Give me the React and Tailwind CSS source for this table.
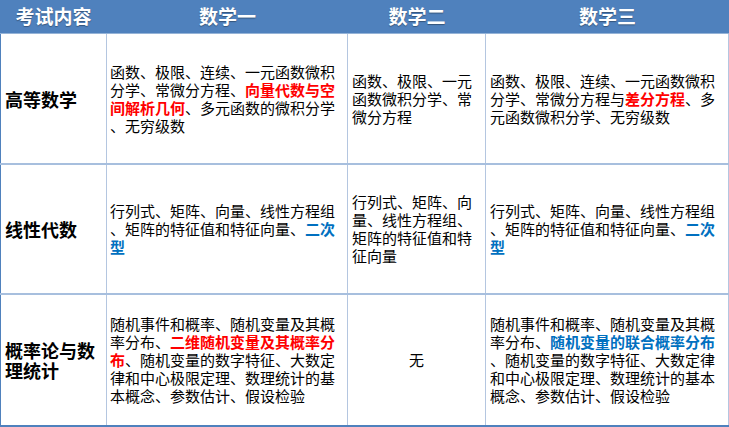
const font = { fontFamily: '"Noto Sans CJK SC", "Noto Sans", sans-serif' };

const Red = ({ children }) => <span className="font-bold text-[#ff0000]">{children}</span>;
const Blue = ({ children }) => <span className="font-bold text-[#0070c0]">{children}</span>;

const rows = [
    {
        title: "高等数学",
        h: "h-[131px]",
        border: "border-b-2 border-[#a7bfde]",
        cells: [
            <>函数、极限、连续、一元函数微积分学、常微分方程、<Red>向量代数与空间解析几何</Red>、多元函数的微积分学、无穷级数</>,
            <>函数、极限、一元函数微积分学、常微分方程</>,
            <>函数、极限、连续、一元函数微积分学、常微分方程与<Red>差分方程</Red>、多元函数微积分学、无穷级数</>,
        ],
    },
    {
        title: "线性代数",
        h: "h-[130px]",
        border: "border-b-2 border-[#a7bfde]",
        cells: [
            <>行列式、矩阵、向量、线性方程组、矩阵的特征值和特征向量、<Blue>二次型</Blue></>,
            <>行列式、矩阵、向量、线性方程组、矩阵的特征值和特征向量</>,
            <>行列式、矩阵、向量、线性方程组、矩阵的特征值和特征向量、<Blue>二次型</Blue></>,
        ],
    },
    {
        title: "概率论与数理统计",
        h: "h-[132px]",
        border: "border-b-2 border-[#4f81bd]",
        cells: [
            <>随机事件和概率、随机变量及其概率分布、<Red>二维随机变量及其概率分布</Red>、随机变量的数字特征、大数定律和中心极限定理、数理统计的基本概念、参数估计、假设检验</>,
            "无",
            <>随机事件和概率、随机变量及其概率分布、<Blue>随机变量的联合概率分布</Blue>、随机变量的数字特征、大数定律和中心极限定理、数理统计的基本概念、参数估计、假设检验</>,
        ],
    },
];

const App = () => {
    return (
        <div className="w-[729px] h-[427px] bg-white overflow-hidden" style={font}>
            <div className="flex h-[34px] bg-[#4f81bd] border-b border-[#95b3d7] text-white font-bold text-[19px] [text-shadow:0_1px_1px_rgba(0,0,0,0.35)]">
                <div className="w-[107px] flex items-center justify-center">考试内容</div>
                <div className="w-[241px] flex items-center justify-center">数学一</div>
                <div className="w-[138px] flex items-center justify-center">数学二</div>
                <div className="w-[243px] flex items-center justify-center">数学三</div>
            </div>
            {rows.map((row) => (
                <div key={row.title} className={`flex ${row.h} ${row.border} text-black`}>
                    <div className="w-[107px] flex items-center border-l border-r border-l-[#4f81bd] border-r-[#b4c6e0] pl-[4px] pr-[4px] text-[18px] leading-[20px] font-bold">
                        {row.title}
                    </div>
                    <div className="w-[241px] flex items-center border-r border-[#b4c6e0] pl-[3px] pr-[6px] text-[15px] leading-[18px] [line-break:anywhere]">
                        <div>{row.cells[0]}</div>
                    </div>
                    <div className={`w-[138px] flex items-center border-r border-[#b4c6e0] pl-[4px] pr-[4px] text-[15px] leading-[18px] [line-break:anywhere] ${row.cells[1] === "无" ? "justify-center" : ""}`}>
                        <div>{row.cells[1]}</div>
                    </div>
                    <div className="w-[243px] flex items-center border-r border-[#b4c6e0] pl-[4px] pr-[4px] text-[15px] leading-[18px] [line-break:anywhere]">
                        <div>{row.cells[2]}</div>
                    </div>
                </div>
            ))}
        </div>
    );
};

export default App;
